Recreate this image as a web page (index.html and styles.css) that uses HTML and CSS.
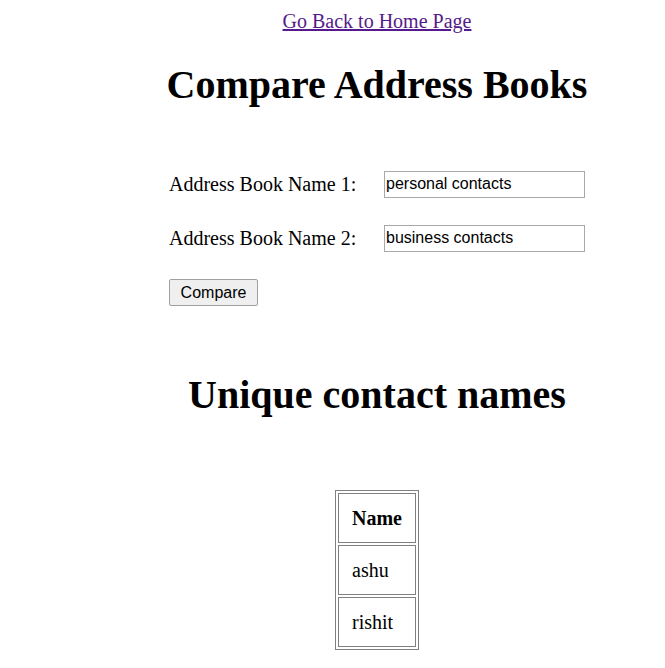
FILE: index.html
```html
<!DOCTYPE html>
<html>
<head>
<meta charset="utf-8">
<link rel="stylesheet" href="styles.css">
</head>
<body>
<div class="page">
  <div class="back"><a href="#" class="back-link">Go Back to Home Page</a></div>
  <h1 class="title">Compare Address Books</h1>
  <form class="form">
    <div class="row">
      <label class="label">Address Book Name 1:</label>
      <input class="field" type="text" value="personal contacts">
    </div>
    <div class="row">
      <label class="label">Address Book Name 2:</label>
      <input class="field" type="text" value="business contacts">
    </div>
    <div class="row">
      <button type="button" class="btn">Compare</button>
    </div>
  </form>
  <h1 class="title sub">Unique contact names</h1>
  <table class="names">
    <tr><th>Name</th></tr>
    <tr><td>ashu</td></tr>
    <tr><td>rishit</td></tr>
  </table>
</div>
</body>
</html>
```

FILE: styles.css
```css
body {
  margin: 8px;
  font-family: "Liberation Serif", "Times New Roman", serif;
  font-size: 20px;
  color: #000;
  background: #fff;
}
.page {
  width: 416px;
  margin-left: 161px;
}
.back {
  text-align: center;
  line-height: 26px;
}
.back-link {
  color: #551a8b;
}
.title {
  display: flex;
  justify-content: center;
  white-space: nowrap;
  font-size: 40px;
  font-weight: bold;
  margin: 28px 0 0;
  line-height: 46px;
}
.form {
  margin-top: 63px;
  display: flex;
  flex-direction: column;
  gap: 27px;
}
.row {
  display: flex;
  align-items: center;
  height: 27px;
}
.label {
  width: 215px;
}
.field {
  box-sizing: border-box;
  width: 201px;
  height: 27px;
  margin: 0;
  border: 1px solid #a9a9a9;
  padding: 1px 1px 2px;
  font-family: "Liberation Sans", Arial, sans-serif;
  font-size: 16px;
  color: #000;
}
.btn {
  box-sizing: border-box;
  width: 89px;
  height: 27px;
  margin: 0;
  padding: 0 6px;
  font-family: "Liberation Sans", Arial, sans-serif;
  font-size: 16px;
  color: #000;
  background: #efefef;
  border: 1px solid #a0a0a0;
  border-radius: 2px;
}
.sub {
  margin-top: 66px;
}
.names {
  margin: 72px auto 0;
  border: 1px solid #808080;
  border-spacing: 2px;
}
.names th,
.names td {
  border: 1px solid #808080;
  padding: 12px 13px 12px;
  text-align: left;
  height: 24px;
}
```
